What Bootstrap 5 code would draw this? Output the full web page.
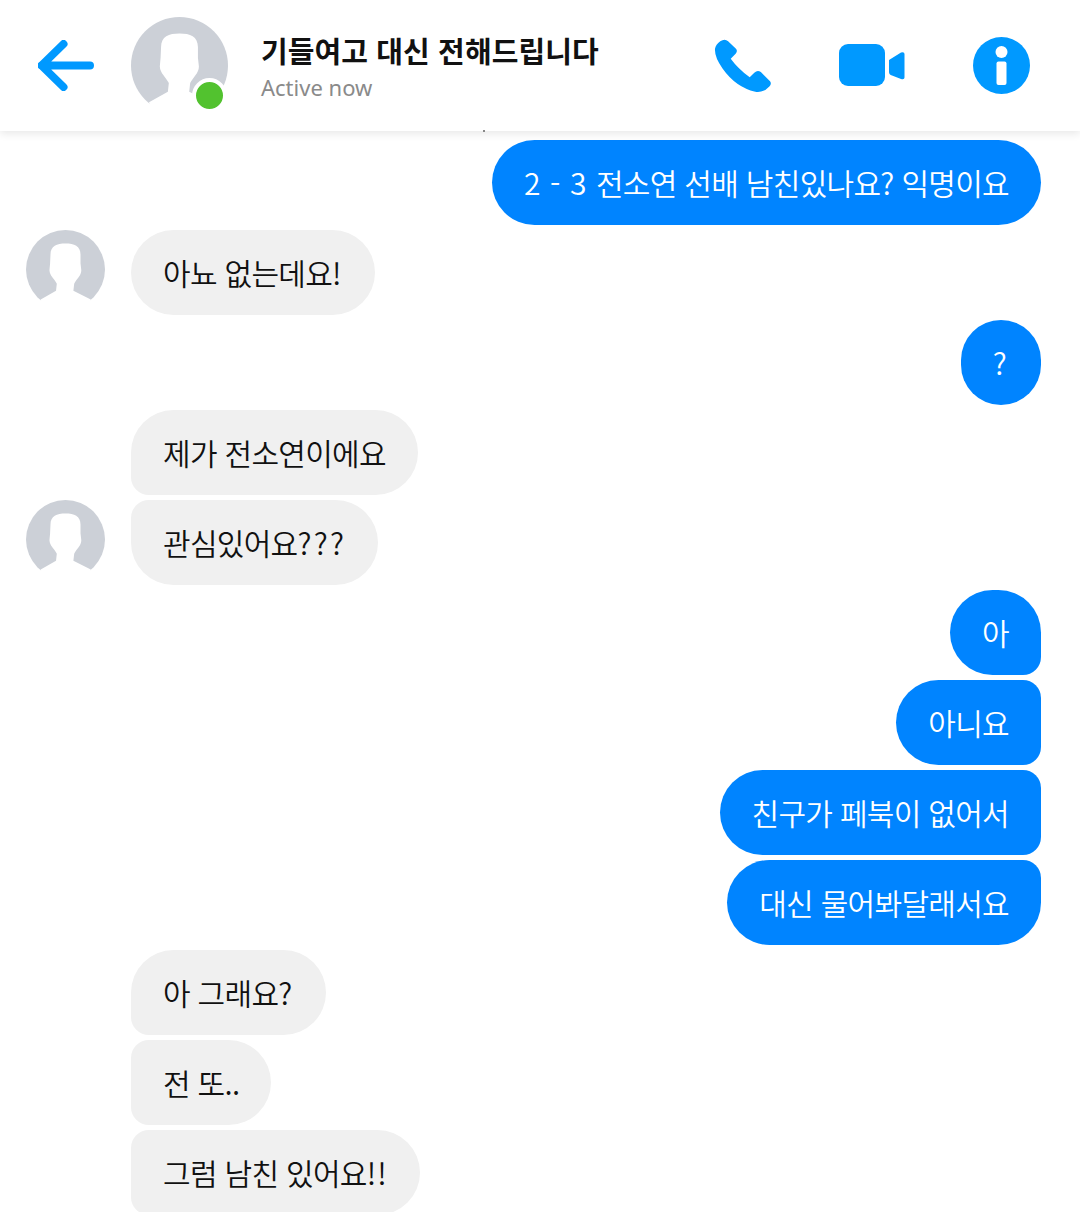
<!DOCTYPE html>
<html lang="ko">
<head>
<meta charset="utf-8">
<title>Messenger</title>
<link href="https://cdn.jsdelivr.net/npm/bootstrap@5.3.0/dist/css/bootstrap.min.css" rel="stylesheet">
<style>
html,body{background:#fff;overflow:hidden;height:1212px;font-family:"Noto Sans CJK KR","Noto Sans",sans-serif}
.chat-head{height:131px;background:#fff;box-shadow:0 3px 8px rgba(0,0,0,.09);position:relative;z-index:2}
.back-ico{width:56px;height:51px;margin-left:38px;margin-top:-1px}
.head-ava{width:97px;height:97px;margin-left:37px;margin-top:-1px}
.online-dot{position:absolute;width:35px;height:35px;left:61px;top:61px;border-radius:50%;background:#52c22f;border:4px solid #fff}
.head-text{margin-left:33px;width:440px}
.head-title{font-size:29px;font-weight:700;color:#111;line-height:40px;letter-spacing:.1px;margin-top:3px}
.head-sub{font-family:"Noto Sans",sans-serif;font-size:22px;color:#8a8a8a;line-height:34px}
.ico-phone{position:absolute;left:714px;top:38px;width:58px;height:55px}
.ico-video{position:absolute;left:839px;top:44px;width:66px;height:43px}
.ico-info{position:absolute;left:973px;top:37px;width:57px;height:57px}
.head-tick{position:absolute;left:483px;top:130px;width:2px;height:2px;background:#888}
.chat-body{padding-top:9px;gap:5px}
.msg-row{height:85px}
.msg-in{padding-left:131px;position:relative}
.msg-out{padding-right:39px}
.ava-small{position:absolute;left:26px;top:0;width:79px;height:79px}
.bubble{height:85px;border-radius:42.5px;padding:0 32px;font-size:30px;font-weight:350;line-height:85px;white-space:nowrap;letter-spacing:-.7px}
.bubble-in{background:#f0f0f0;color:#111}
.bubble-out{background:#0084ff;color:#fff}
.sq-tl{border-top-left-radius:18px}
.sq-bl{border-bottom-left-radius:18px}
.sq-tr{border-top-right-radius:18px}
.sq-br{border-bottom-right-radius:18px}
.wide-q{letter-spacing:2.2px}
.wide-x{letter-spacing:1.2px}
.wide-d{letter-spacing:.6px}
</style>
</head>
<body>
<svg width="0" height="0" class="position-absolute">
  <defs>
    <symbol id="ava" viewBox="0 0 100 100">
      <circle cx="50" cy="50" r="50" fill="#ccd0d7"/>
      <path fill="#fff" d="M50 17C39 17 31 20 31 31L30.500 42 29.700 51C30 58 36 62 39 68L38 77 18.600 88 22 100 78 100 82 88 60 77 61 68C64 62 70 58 70 51L69 42 69 31C69 20 61 17 50 17Z"/>
    </symbol>
  </defs>
</svg>
<header class="chat-head d-flex align-items-center">
  <svg class="back-ico" viewBox="0 0 56 51"><path d="M25.500 4 3.500 25.500 25.500 47M3.500 25.500H52" fill="none" stroke="#0099ff" stroke-width="8" stroke-linecap="round" stroke-linejoin="round"/></svg>
  <div class="head-ava position-relative">
    <svg width="97" height="97"><use href="#ava"/></svg>
    <span class="online-dot"></span>
  </div>
  <div class="head-text">
    <div class="head-title">기들여고 대신 전해드립니다</div>
    <div class="head-sub">Active now</div>
  </div>
  <svg class="ico-phone" viewBox="100 112 175 168"><path fill="#0099ff" d="M118 122Q132 112 142 122L166 145Q172 152 165 160L150 175Q172 205 208 232L222 218Q232 208 242 216L270 244Q276 252 268 260Q250 280 225 276Q165 262 125 205Q100 170 102 145Q104 132 118 122Z"/></svg>
  <svg class="ico-video" viewBox="0 0 66 43"><rect width="46" height="42" rx="9" fill="#0099ff"/><path fill="#0099ff" d="M50 16 62 8.500Q65.500 7.500 65.500 10V33.500Q65.500 36 62 35L53 31.500Q50 30.500 50 28Z"/></svg>
  <svg class="ico-info" viewBox="0 0 57 57"><circle cx="28.500" cy="28.500" r="28.500" fill="#0099ff"/><circle cx="28.500" cy="15" r="6" fill="#fff"/><rect x="23.500" y="24.500" width="10" height="23.500" rx="2" fill="#fff"/></svg>
  <span class="head-tick"></span>
</header>
<main class="chat-body d-flex flex-column">
  <div class="msg-row msg-out d-flex justify-content-end"><div class="bubble bubble-out"><span class="wide-d">2 - 3 </span>전소연 선배 남친있나요? 익명이요</div></div>
  <div class="msg-row msg-in d-flex"><svg class="ava-small"><use href="#ava"/></svg><div class="bubble bubble-in">아뇨 없는데요<span class="wide-x">!</span></div></div>
  <div class="msg-row msg-out d-flex justify-content-end"><div class="bubble bubble-out"><span class="wide-q">?</span></div></div>
  <div class="msg-row msg-in d-flex"><div class="bubble bubble-in sq-bl">제가 전소연이에요</div></div>
  <div class="msg-row msg-in d-flex"><svg class="ava-small"><use href="#ava"/></svg><div class="bubble bubble-in sq-tl">관심있어요<span class="wide-q">???</span></div></div>
  <div class="msg-row msg-out d-flex justify-content-end"><div class="bubble bubble-out sq-br">아</div></div>
  <div class="msg-row msg-out d-flex justify-content-end"><div class="bubble bubble-out sq-tr sq-br">아니요</div></div>
  <div class="msg-row msg-out d-flex justify-content-end"><div class="bubble bubble-out sq-tr sq-br">친구가 페북이 없어서</div></div>
  <div class="msg-row msg-out d-flex justify-content-end"><div class="bubble bubble-out sq-tr">대신 물어봐달래서요</div></div>
  <div class="msg-row msg-in d-flex"><div class="bubble bubble-in sq-bl">아 그래요<span class="wide-x">?</span></div></div>
  <div class="msg-row msg-in d-flex"><div class="bubble bubble-in sq-tl sq-bl">전 또..</div></div>
  <div class="msg-row msg-in d-flex"><div class="bubble bubble-in sq-tl sq-bl">그럼 남친 있어요<span class="wide-x">!!</span></div></div>
</main>
<script src="https://cdn.jsdelivr.net/npm/bootstrap@5.3.0/dist/js/bootstrap.bundle.min.js"></script>
</body>
</html>
